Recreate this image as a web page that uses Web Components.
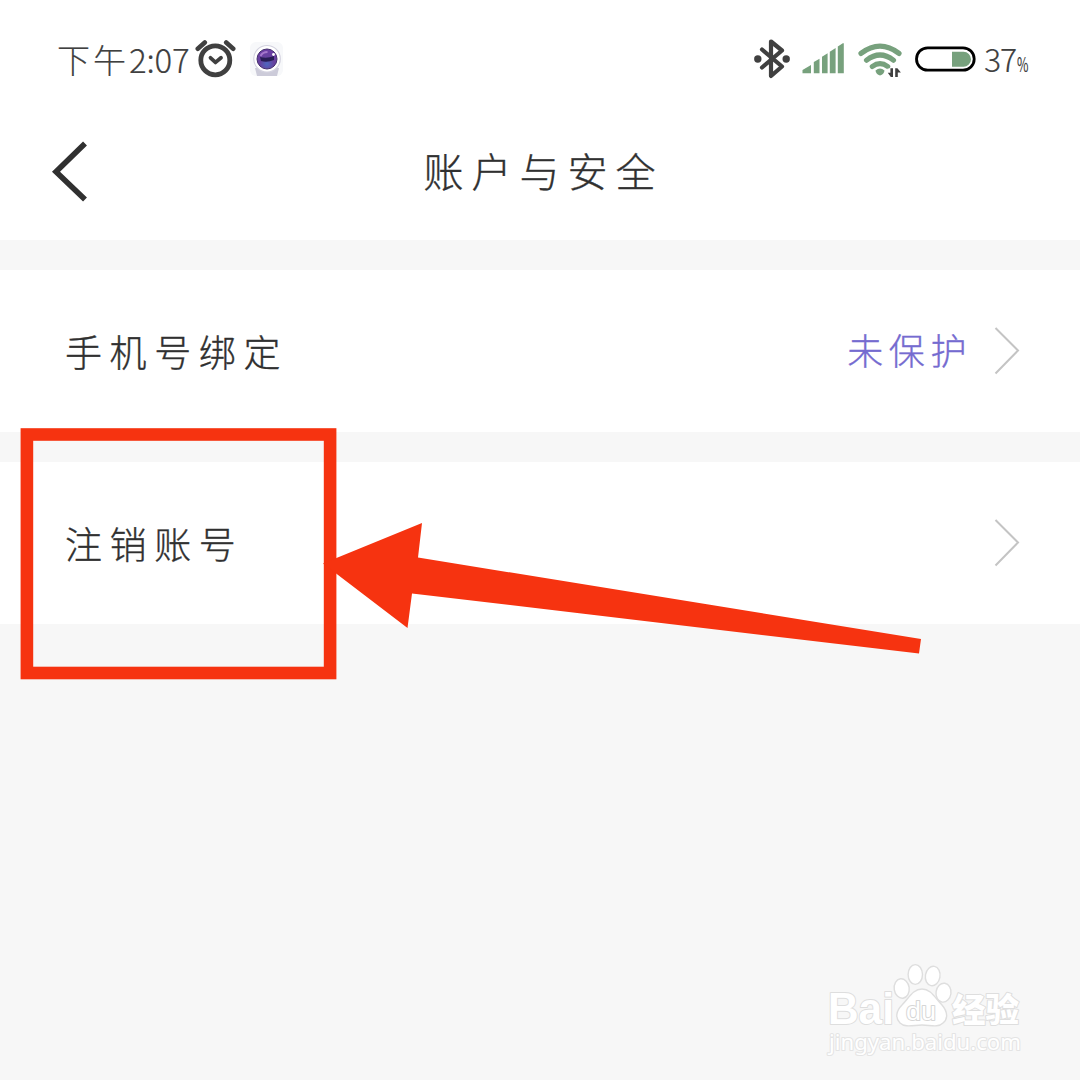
<!DOCTYPE html>
<html lang="zh-CN">
<head>
<meta charset="utf-8">
<title>账户与安全</title>
<style>
html,body{margin:0;padding:0}
body{width:1080px;height:1080px;overflow:hidden;background:#f7f7f7;color:#303030;font-family:"Noto Sans CJK SC",sans-serif;font-weight:300;-webkit-text-stroke:.35px currentColor}
</style>
</head>
<body>
<security-page></security-page>
<script>
const define = (name, html) => {
  const template = document.createElement('template');
  template.innerHTML = html;
  customElements.define(name, class extends HTMLElement {
    constructor() {
      super();
      this.attachShadow({mode: 'open'}).appendChild(template.content.cloneNode(true));
    }
  });
};

define('status-bar', `
<style>
:host{display:flex;height:120px;box-sizing:border-box;padding:0 51px 2px 57px;align-items:center;justify-content:space-between;color:#404040;-webkit-text-stroke-width:.15px}
.side{display:flex;align-items:center;height:60px}
svg{display:block;flex:none}
.time{font-size:33px;line-height:60px;white-space:nowrap;width:137px}
.time .cn{letter-spacing:3px}
.time .num{font-size:33px;letter-spacing:-.2px}
.camera{margin-left:14px}
.signal{margin-left:11px}
.wifi{margin-left:13px}
.battery{margin-left:11px}
.pct{display:flex;align-items:baseline;margin-left:8px;font-size:32px;line-height:60px;width:45px;white-space:nowrap;letter-spacing:-1px;padding-top:4px}
.pct span{width:33px}
.pct small{font-size:20px;transform:scaleX(.62);transform-origin:0 50%;width:10px;font-weight:400}
</style>
<div class="side">
  <div class="time"><span class="cn">下午</span><span class="num">2:07</span></div>
  <svg class="alarm" width="42" height="40" viewBox="194 39 42 40" fill="none" stroke="#404040" stroke-linecap="round">
    <circle cx="215.3" cy="60.3" r="14.5" stroke-width="4.800"/>
    <path d="M197.8 48.8l7-6.3M226.2 42.5l7 6.3" stroke-width="4.6"/>
    <path d="M210.500 57.800l5 4.600 5.500-4.600" stroke-width="3.800" stroke-linejoin="round"/>
  </svg>
  <svg class="camera" width="34" height="36" viewBox="250 41 34 36">
    <defs><radialGradient id="lens" cx=".5" cy=".75" r=".7"><stop stop-color="#4d68c0"/><stop offset=".5" stop-color="#67429f"/><stop offset="1" stop-color="#6b3da4"/></radialGradient></defs>
    <rect x="250" y="42" width="33" height="34" rx="6" fill="#f7f8fa"/>
    <path d="M255 68h24l-2 8h-20z" fill="#cccbd9"/>
    <circle cx="267" cy="58.8" r="13.3" fill="#fff" stroke="#d3d2df" stroke-width="1.2"/>
    <circle cx="267" cy="59" r="10" fill="url(#lens)" stroke="#44306d"/>
    <path d="M260 57q7 2 14-1v4q-7 3-13 1z" fill="#281d55"/>
    <path d="M260.500 56q2-4 7-4" fill="none" stroke="#a578cc" stroke-width="2"/>
    <circle cx="273.500" cy="54.500" r="1.400" fill="#fff"/>
  </svg>
</div>
<div class="side">
  <svg width="38" height="40" viewBox="753 39 38 40">
    <path d="M762 49.500l20 17-11 9.500V41.500l11 9-20 17" fill="none" stroke="#404040" stroke-width="4.200" stroke-linecap="round" stroke-linejoin="round"/>
    <circle cx="757.800" cy="59" r="3.700" fill="#404040"/><circle cx="786.200" cy="59" r="3.700" fill="#404040"/>
  </svg>
  <svg class="signal" width="43" height="34" viewBox="802 42 43 34" fill="#77a17d">
    <path d="M802.500 73.200V70l8.500-5v8.200zM813.800 73.200V62l5.700-3.300v14.500zM822 73.200V56.800l5.600-3.600v20zM829.800 73.200V51.800l5.800-3.800v25.200zM837.800 73.200V46.500l5-3.200h1v29.900z"/>
  </svg>
  <svg class="wifi" width="46" height="40" viewBox="858 39 46 40">
    <g fill="none" stroke="#77a17d" stroke-width="5.200" stroke-linecap="round">
      <path d="M861 53.400q19-14.400 38 0M866.500 60.200q13.500-10.400 27 0M872.300 66.500q7.700-5.600 15.400 0"/>
    </g>
    <path d="M875.500 70.500q4.500-4 9 0q-.5 3.800-4.500 5q-4-1.200-4.500-5z" fill="#77a17d"/>
    <path d="M887.500 68.500h14v9h-14z" fill="#fff"/>
    <path d="M893 68.200v8.800h-2.200l-3-4.200h2.600v-4.600zM895.200 77v-8.800h2.200l3.500 4.400h-3.100V77z" fill="#404040"/>
  </svg>
  <svg class="battery" width="61" height="26" viewBox="915 45 61 26">
    <rect x="916.500" y="46.800" width="57.700" height="22.400" rx="11.200" fill="#fff" stroke="#000" stroke-width="2.800"/>
    <path d="M952 50.700h11.500a7.500 7.500 0 0 1 0 15H952z" fill="#77a17d"/>
  </svg>
  <div class="pct"><span>37</span><small>%</small></div>
</div>`);

define('title-bar', `
<style>
:host{display:grid;grid-template-columns:110px 1fr 110px;align-items:center;height:120px}
svg{display:block;margin:-18px 0 0 50px}
h1{margin:-20px 0 0 7px;font-size:40px;line-height:60px;font-weight:300;letter-spacing:8px;text-align:center}
</style>
<svg width="40" height="64" viewBox="50 139 40 64"><path d="M85 143.500L56 171.700 85 199.500" fill="none" stroke="#303030" stroke-width="5.600"/></svg>
<h1><slot></slot></h1>`);

define('setting-row', `
<style>
:host{display:flex;align-items:center;height:162px;box-sizing:border-box;padding:0 60px 1px 65px;background:#fff}
.label{font-size:37px;line-height:60px;letter-spacing:7.600px;flex:1}
.value{font-size:36px;line-height:60px;letter-spacing:5.600px;color:#756bd0;margin-right:22px;margin-top:-3px}
svg{display:block;flex:none}
</style>
<div class="label"><slot></slot></div>
<div class="value"><slot name="value"></slot></div>
<svg width="26" height="50" viewBox="0 0 26 50"><path d="M1.500 2L24 24.500 1.500 47.500" fill="none" stroke="#c4c4c4" stroke-width="2"/></svg>`);

define('mark-overlay', `
<style>
:host{position:absolute;inset:0;pointer-events:none}
svg{display:block}
</style>
<svg width="1080" height="1080" viewBox="0 0 1080 1080" fill="#f63310">
  <rect x="26.900" y="434.500" width="303.200" height="238.500" fill="none" stroke="#f63310" stroke-width="12.600"/>
  <path d="M323 563.500L422 523l-4 34.500L921 639l-2 14.500L412 593.500 407.500 628z"/>
</svg>`);

define('baidu-mark', `
<style>
:host{position:absolute;right:52px;bottom:16px;width:206px;-webkit-text-stroke-width:0}
svg{display:block;overflow:visible}
text{fill:#fff;stroke:#dedede;stroke-width:2px;paint-order:stroke;stroke-linejoin:round}
</style>
<svg width="206" height="104" viewBox="822 960 206 104">
  <text x="828" y="1024" font-family="Liberation Sans,sans-serif" font-weight="700" font-size="44" textLength="66" lengthAdjust="spacingAndGlyphs">Bai</text>
  <g fill="#fff" stroke="#dedede" stroke-width="1.400">
    <ellipse cx="901.700" cy="988.500" rx="7.500" ry="9.800" transform="rotate(-8 901.700 988.500)"/>
    <ellipse cx="915.300" cy="974.500" rx="7.200" ry="9.900"/>
    <ellipse cx="932.700" cy="976" rx="7.300" ry="9.800" transform="rotate(10 932.700 976)"/>
    <ellipse cx="943.500" cy="992.700" rx="7.500" ry="9.500" transform="rotate(8 943.500 992.700)"/>
    <path d="M922 989c9 0 13 9 20 16 6 7 6 14 1 18-5 5-13 2-21 2s-17 3-22-2c-5-5-4-12 2-18 7-7 11-16 20-16z"/>
  </g>
  <text x="906" y="1019.500" font-family="Liberation Sans,sans-serif" font-size="26" textLength="30" lengthAdjust="spacingAndGlyphs" style="stroke:#d6d6d6">du</text>
  <text x="952" y="1022" font-family="Noto Sans CJK SC,sans-serif" font-weight="900" font-size="33" textLength="67" lengthAdjust="spacingAndGlyphs">经验</text>
  <text x="829" y="1050" font-family="Noto Sans,sans-serif" font-size="21" font-weight="400" textLength="192" lengthAdjust="spacingAndGlyphs" style="stroke:#e4e4e4">jingyan.baidu.com</text>
</svg>`);

define('security-page', `
<style>
:host{display:block;position:relative;width:1080px;height:1080px;overflow:hidden;background:#f7f7f7}
header{background:#fff}
main{display:flex;flex-direction:column;gap:30px;padding-top:30px}
</style>
<header><status-bar></status-bar><title-bar>账户与安全</title-bar></header>
<main>
  <setting-row>手机号绑定<span slot="value">未保护</span></setting-row>
  <setting-row>注销账号</setting-row>
</main>
<baidu-mark></baidu-mark>
<mark-overlay></mark-overlay>`);
</script>
</body>
</html>
